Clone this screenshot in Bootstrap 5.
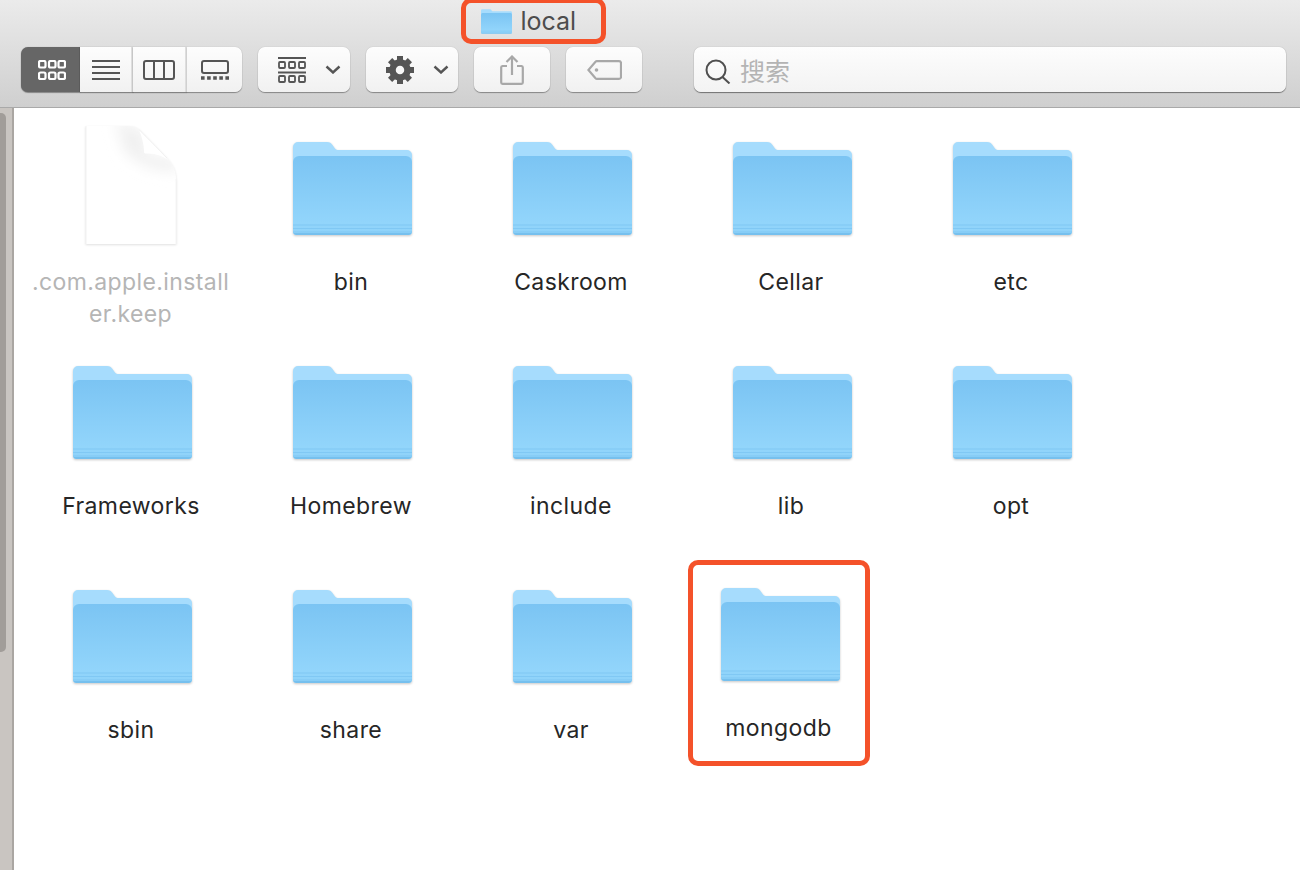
<!DOCTYPE html>
<html lang="zh">
<head>
    <meta charset="utf-8">
    <title>local</title>
    <link href="https://cdn.jsdelivr.net/npm/bootstrap@5.3.0/dist/css/bootstrap.min.css" rel="stylesheet">
    <style>
        body {
            background: #fff;
            font-family: Inter, "Noto Sans CJK SC", sans-serif;
            overflow: hidden;
        }
        .finder-bar {
            height: 108px;
            background: linear-gradient(#ebebeb, #cfcfcf);
            border-bottom: 1px solid #a9a9a9;
            overflow: hidden;
        }
        .mark-title {
            width: 145px;
            height: 46px;
            margin: -2px 0 0 461px;
            border: 5.5px solid #f4522a;
            border-radius: 10px;
            padding-left: 14.5px;
            gap: 9px;
            color: #4d4d4d;
            font-size: 25px;
            line-height: 1;
        }
        .tool-row {
            margin: 3px 14px 0 21px;
            gap: 16px;
            height: 45px;
        }
        .btn.tool-btn {
            height: 45px;
            padding: 0;
            border: 0;
            border-radius: 7px;
            background: linear-gradient(#fdfdfd, #f1f1f1);
            box-shadow: 0 1px 1px rgba(0, 0, 0, .35), 0 0 1px rgba(0, 0, 0, .25);
            display: flex;
            align-items: center;
            justify-content: center;
        }
        .btn-group > .btn.tool-btn.seg-btn {
            border-right: 2px solid #dedede;
            flex: none;
            margin-left: 0;
        }
        .btn-group > .btn.tool-btn.seg-btn:last-child { border-right: 0; }
        .btn-group > .btn.tool-btn.active-view { background: #666; border-right: 0; padding-left: 3px; }
        .btn.tool-btn.menu-btn { justify-content: flex-start; padding-left: 20px; gap: 19px; }
        .w-59 { width: 59px; }
        .w-53 { width: 53px; }
        .w-54 { width: 54px; }
        .w-55 { width: 55px; }
        .w-92 { width: 92px; }
        .w-76 { width: 76px; }
        .search-wrap {
            width: 592px;
            margin-left: 36px;
            height: 45px;
        }
        .search-icon { left: 11px; top: 12px; }
        .form-control.search-box {
            height: 45px;
            border: 0;
            border-radius: 7px;
            padding: 0 0 0 46px;
            background: linear-gradient(#fdfdfd, #f3f3f3);
            box-shadow: 0 1px 1px rgba(0, 0, 0, .45), 0 0 1px rgba(0, 0, 0, .3);
            font-family: "Noto Sans CJK SC", sans-serif;
            font-size: 25px;
        }
        .search-box::placeholder { color: #b4b4b4; opacity: 1; }
        .side-strip {
            width: 14px;
            height: 762px;
            background: #c9c5c1;
            border-right: 2px solid #aaa6a2;
            padding-top: 5px;
        }
        .side-thumb {
            width: 6px;
            height: 539px;
            background: #a19d99;
            border-radius: 0 5px 5px 0;
        }
        .icon-grid {
            display: grid;
            grid-template-columns: repeat(5, 220px);
            grid-auto-rows: 224px;
            padding: 17px 0 0 7px;
        }
        .icon-slot { height: 120px; }
        .folder-pic {
            margin: 0 0 8px 2px;
            filter: drop-shadow(0 1px 1px rgba(0, 0, 0, .22));
        }
        .page-pic { filter: drop-shadow(0 1px 1px rgba(0, 0, 0, .12)); }
        .file-label {
            margin-top: 21px;
            font-size: 23px;
            letter-spacing: .4px;
            line-height: 32px;
            color: #262626;
            word-break: break-all;
        }
        .file-label.dim { color: #b5b5b5; width: 205px; margin-left: 7px; margin-right: 8px; }
        .mark-item {
            width: 182px;
            height: 206px;
            margin: -13px 0 0 6.5px;
            padding-top: 21.5px;
            border: 5.5px solid #f4522a;
            border-radius: 10px;
            box-sizing: border-box;
        }
        .mark-item .folder-pic { display: block; margin: 0 0 0 28px; }
        .mark-item .file-label { margin-top: 29px; }
    </style>
</head>
<body>
    <svg width="0" height="0" class="d-block">
        <defs>
            <linearGradient id="frontFill" x1="0" y1="0" x2="0" y2="1">
                <stop offset="0" stop-color="#7bc4f3"/>
                <stop offset=".85" stop-color="#92d5fb"/>
                <stop offset="1" stop-color="#8ed2f9"/>
            </linearGradient>
            <filter id="softBlur" x="-30%" y="-30%" width="160%" height="160%">
                <feGaussianBlur stdDeviation="7"/>
            </filter>
            <clipPath id="pageClip">
                <path d="M1 1h43c6 0 9 2 13 6l25 26c6 6 9 13 9 21v65H1z"/>
            </clipPath>
            <symbol id="folder" viewBox="0 0 119 96">
                <path d="M0 6a5 5 0 0 1 5-5h29c3 0 4 1 5.500 3l2.500 3.500c1 1.300 2 1.500 4 1.500h68a5 5 0 0 1 5 5v76a4 4 0 0 1-4 4H4a4 4 0 0 1-4-4z" fill="#a6dcfd"/>
                <path d="M0 21a6 6 0 0 1 6-6h107a6 6 0 0 1 6 6v69a4 4 0 0 1-4 4H4a4 4 0 0 1-4-4z" fill="url(#frontFill)"/>
                <path d="M0 84h119M0 87.500h119M0 91h119" stroke="#80c8f4" stroke-width="1.200" fill="none"/>
                <path d="M0 92h119v-1 0a4 4 0 0 1-4 3H4a4 4 0 0 1-4-3z" fill="#76c0ee"/>
            </symbol>
        </defs>
    </svg>

    <div class="finder-bar">
        <div class="mark-title d-flex align-items-center">
            <svg width="31" height="25" aria-hidden="true"><use href="#folder"/></svg>
            <span>local</span>
        </div>
        <div class="tool-row d-flex">
            <div class="btn-group">
                <button class="btn tool-btn seg-btn active-view w-59" type="button">
                    <svg width="28" height="20" fill="none" stroke="#fff" stroke-width="2.200"><rect x="1" y="1" width="6.500" height="6.500" rx="1.500"/><rect x="11" y="1" width="6.500" height="6.500" rx="1.500"/><rect x="20.500" y="1" width="6.500" height="6.500" rx="1.500"/><rect x="1" y="12.500" width="6.500" height="6.500" rx="1.500"/><rect x="11" y="12.500" width="6.500" height="6.500" rx="1.500"/><rect x="20.500" y="12.500" width="6.500" height="6.500" rx="1.500"/></svg>
                </button>
                <button class="btn tool-btn seg-btn w-53" type="button">
                    <svg width="28" height="20" stroke="#555" stroke-width="2"><path d="M0 1h28M0 7h28M0 13h28M0 19h28"/></svg>
                </button>
                <button class="btn tool-btn seg-btn w-54" type="button">
                    <svg width="32" height="20" fill="none" stroke="#555" stroke-width="2"><rect x="1" y="1" width="30" height="18" rx="2"/><path d="M11 1v18M21 1v18"/></svg>
                </button>
                <button class="btn tool-btn seg-btn w-55" type="button">
                    <svg width="28" height="20" fill="none" stroke="#555" stroke-width="2"><rect x="1" y="1" width="26" height="12" rx="2"/><path d="M0 18h28" stroke-width="3.500" stroke-dasharray="3.600 2.500"/></svg>
                </button>
            </div>
            <button class="btn tool-btn menu-btn w-92" type="button">
                <svg width="28" height="26" fill="none" stroke="#555" stroke-width="2"><path d="M0 1h28M0 15.500h28"/><g stroke-width="1.800"><rect x="1" y="5" width="6" height="6" rx="1"/><rect x="11" y="5" width="6" height="6" rx="1"/><rect x="21" y="5" width="6" height="6" rx="1"/><rect x="1" y="19" width="6" height="6" rx="1"/><rect x="11" y="19" width="6" height="6" rx="1"/><rect x="21" y="19" width="6" height="6" rx="1"/></g></svg>
                <svg width="16" height="9" fill="none" stroke="#555" stroke-width="2.400"><path d="M1.500 1.500 8 7.500l6.500-6"/></svg>
            </button>
            <button class="btn tool-btn menu-btn w-92" type="button">
                <svg width="28" height="28" viewBox="-14 -14 28 28">
                    <circle r="7.500" fill="none" stroke="#555" stroke-width="6.500"/>
                    <g fill="#555">
                        <rect x="-3" y="-14" width="6" height="7"/>
                        <rect x="-3" y="-14" width="6" height="7" transform="rotate(45)"/>
                        <rect x="-3" y="-14" width="6" height="7" transform="rotate(90)"/>
                        <rect x="-3" y="-14" width="6" height="7" transform="rotate(135)"/>
                        <rect x="-3" y="-14" width="6" height="7" transform="rotate(180)"/>
                        <rect x="-3" y="-14" width="6" height="7" transform="rotate(225)"/>
                        <rect x="-3" y="-14" width="6" height="7" transform="rotate(270)"/>
                        <rect x="-3" y="-14" width="6" height="7" transform="rotate(315)"/>
                    </g>
                </svg>
                <svg width="16" height="9" fill="none" stroke="#555" stroke-width="2.400"><path d="M1.500 1.500 8 7.500l6.500-6"/></svg>
            </button>
            <button class="btn tool-btn w-76" type="button">
                <svg width="24" height="30" fill="none" stroke="#a8a8a8" stroke-width="2.200"><path d="M7 11H2.500A1.500 1.500 0 0 0 1.200 12.500v15a1.300 1.300 0 0 0 1.300 1.300h19a1.300 1.300 0 0 0 1.300-1.300v-15a1.500 1.500 0 0 0-1.300-1.500H17M12 20V1.500M6.500 7 12 1.500 17.500 7"/></svg>
            </button>
            <button class="btn tool-btn w-76" type="button">
                <svg width="35" height="20" fill="none" stroke="#a8a8a8" stroke-width="2.200"><path d="M10 1.100h22a2 2 0 0 1 2 1.900v14a2 2 0 0 1-2 1.900H10a2 2 0 0 1-1.500-.6L1.400 10 8.500 1.700A2 2 0 0 1 10 1.100z"/><circle cx="9.500" cy="10" r="1.800" fill="#a8a8a8" stroke="none"/></svg>
            </button>
            <div class="search-wrap position-relative">
                <svg class="search-icon position-absolute" width="26" height="25" fill="none" stroke="#4f4f4f" stroke-width="2"><circle cx="11" cy="11" r="9.500"/><path d="m17.500 18 7 6.500"/></svg>
                <input class="form-control search-box" type="text" placeholder="搜索" aria-label="搜索">
            </div>
        </div>
    </div>

    <div class="d-flex">
        <div class="side-strip flex-shrink-0"><div class="side-thumb"></div></div>
        <div class="icon-grid">
            <div class="text-center">
                <div class="icon-slot d-flex justify-content-center">
                    <svg class="page-pic" width="92" height="120" viewBox="0 0 92 120">
                        <path d="M1 1h43c6 0 9 2 13 6l25 26c6 6 9 13 9 21v65H1z" fill="#fff"/>
                        <g clip-path="url(#pageClip)">
                            <path d="M30 -6 60 6 62 30 92 34 92 48 62 42 40 28z" fill="#f0f0f0" filter="url(#softBlur)"/>
                        </g>
                        <path d="M54 4.500c3 8 5 15 5 22 0 1.500.5 2 2 2 7 0 15 1 22 6.500z" fill="#fff"/>
                        <path d="M54 4.500 82 33" stroke="#f1f1f1" fill="none"/>
                        <path d="M1 1v118" stroke="#f1f1f1" fill="none"/>
                        <path d="M91 54v65" stroke="#f5f5f5" fill="none"/>
                    </svg>
                </div>
                <div class="file-label dim">.com.apple.installer.keep</div>
            </div>
            <div class="text-center">
                <div class="icon-slot d-flex justify-content-center align-items-end"><svg class="folder-pic" width="119" height="96"><use href="#folder"/></svg></div>
                <div class="file-label">bin</div>
            </div>
            <div class="text-center">
                <div class="icon-slot d-flex justify-content-center align-items-end"><svg class="folder-pic" width="119" height="96"><use href="#folder"/></svg></div>
                <div class="file-label">Caskroom</div>
            </div>
            <div class="text-center">
                <div class="icon-slot d-flex justify-content-center align-items-end"><svg class="folder-pic" width="119" height="96"><use href="#folder"/></svg></div>
                <div class="file-label">Cellar</div>
            </div>
            <div class="text-center">
                <div class="icon-slot d-flex justify-content-center align-items-end"><svg class="folder-pic" width="119" height="96"><use href="#folder"/></svg></div>
                <div class="file-label">etc</div>
            </div>
            <div class="text-center">
                <div class="icon-slot d-flex justify-content-center align-items-end"><svg class="folder-pic" width="119" height="96"><use href="#folder"/></svg></div>
                <div class="file-label">Frameworks</div>
            </div>
            <div class="text-center">
                <div class="icon-slot d-flex justify-content-center align-items-end"><svg class="folder-pic" width="119" height="96"><use href="#folder"/></svg></div>
                <div class="file-label">Homebrew</div>
            </div>
            <div class="text-center">
                <div class="icon-slot d-flex justify-content-center align-items-end"><svg class="folder-pic" width="119" height="96"><use href="#folder"/></svg></div>
                <div class="file-label">include</div>
            </div>
            <div class="text-center">
                <div class="icon-slot d-flex justify-content-center align-items-end"><svg class="folder-pic" width="119" height="96"><use href="#folder"/></svg></div>
                <div class="file-label">lib</div>
            </div>
            <div class="text-center">
                <div class="icon-slot d-flex justify-content-center align-items-end"><svg class="folder-pic" width="119" height="96"><use href="#folder"/></svg></div>
                <div class="file-label">opt</div>
            </div>
            <div class="text-center">
                <div class="icon-slot d-flex justify-content-center align-items-end"><svg class="folder-pic" width="119" height="96"><use href="#folder"/></svg></div>
                <div class="file-label">sbin</div>
            </div>
            <div class="text-center">
                <div class="icon-slot d-flex justify-content-center align-items-end"><svg class="folder-pic" width="119" height="96"><use href="#folder"/></svg></div>
                <div class="file-label">share</div>
            </div>
            <div class="text-center">
                <div class="icon-slot d-flex justify-content-center align-items-end"><svg class="folder-pic" width="119" height="96"><use href="#folder"/></svg></div>
                <div class="file-label">var</div>
            </div>
            <div class="mark-item text-center">
                <svg class="folder-pic" width="119" height="96"><use href="#folder"/></svg>
                <div class="file-label">mongodb</div>
            </div>
        </div>
    </div>

    <script src="https://cdn.jsdelivr.net/npm/bootstrap@5.3.0/dist/js/bootstrap.bundle.min.js"></script>
</body>
</html>
